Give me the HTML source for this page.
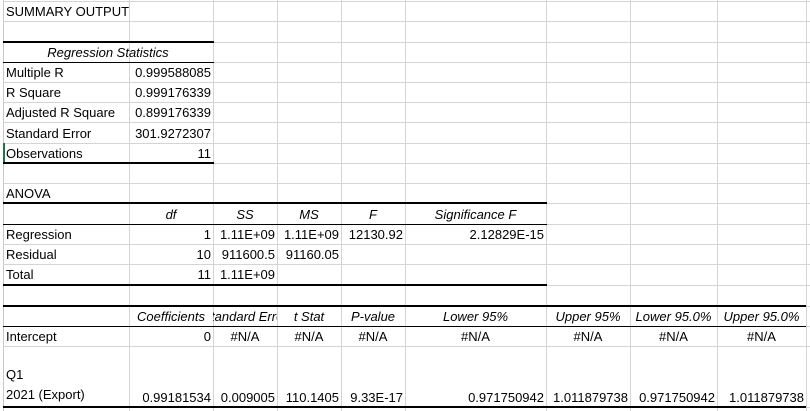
<!DOCTYPE html>
<html><head><style>
body{margin:0;width:810px;height:411px;background:#fff;position:relative;overflow:hidden;font-family:"Liberation Sans",Arial,sans-serif;font-size:13px;color:#000}
.v{position:absolute;width:1px;background:#d4d4d4;top:0;height:411px}
.h{position:absolute;height:1px;background:#d4d4d4;left:3px;width:807px}
.k{position:absolute;background:#000}
.c{position:absolute;display:flex;align-items:flex-end;white-space:nowrap;overflow:hidden;padding-bottom:2px;box-sizing:border-box;line-height:15px}
.l{justify-content:flex-start;padding-left:3px}
.r{justify-content:flex-end;padding-right:2px}
.m{justify-content:center}
i{font-style:italic}
</style></head><body>
<div class="v" style="left:3px;background:#c8c8c8"></div>
<div class="v" style="left:129px"></div><div class="v" style="left:213px"></div>
<div class="v" style="left:277px"></div><div class="v" style="left:341px"></div>
<div class="v" style="left:405px"></div><div class="v" style="left:546px"></div>
<div class="v" style="left:630px"></div><div class="v" style="left:717px"></div>
<div class="v" style="left:806px"></div>
<div class="h" style="top:1px"></div><div class="h" style="top:21px"></div>
<div class="h" style="top:62px"></div><div class="h" style="top:82px"></div>
<div class="h" style="top:102px"></div><div class="h" style="top:122px"></div>
<div class="h" style="top:143px"></div><div class="h" style="top:183px"></div>
<div class="h" style="top:244px"></div><div class="h" style="top:264px"></div>
<div class="h" style="top:346px"></div>
<div class="h" style="top:42px"></div><div class="h" style="top:163px"></div>
<div class="h" style="top:203px"></div><div class="h" style="top:224px"></div>
<div class="h" style="top:285px"></div><div class="h" style="top:306px"></div>
<div class="h" style="top:326px"></div><div class="h" style="top:407px"></div>
<div style="position:absolute;left:3px;top:143px;width:2px;height:20px;background:#217346"></div>
<div class="k" style="left:3px;top:41px;width:211px;height:2px"></div>
<div class="k" style="left:3px;top:62px;width:211px;height:1px"></div>
<div class="k" style="left:3px;top:162px;width:211px;height:2px"></div>
<div class="k" style="left:3px;top:202px;width:544px;height:2px"></div>
<div class="k" style="left:3px;top:224px;width:544px;height:1px"></div>
<div class="k" style="left:3px;top:284px;width:544px;height:2px"></div>
<div class="k" style="left:3px;top:305px;width:803px;height:2px"></div>
<div class="k" style="left:3px;top:326px;width:803px;height:1px"></div>
<div class="k" style="left:3px;top:406px;width:803px;height:2px"></div>
<div class="c l" style="left:3px;top:1px;width:200px;height:20px">SUMMARY OUTPUT</div>
<div class="c m" style="left:3px;top:42px;width:210px;height:20px"><i>Regression Statistics</i></div>
<div class="c l" style="left:3px;top:62px;width:126px;height:20px">Multiple R</div>
<div class="c r" style="left:129px;top:62px;width:84px;height:20px">0.999588085</div>
<div class="c l" style="left:3px;top:82px;width:126px;height:20px">R Square</div>
<div class="c r" style="left:129px;top:82px;width:84px;height:20px">0.999176339</div>
<div class="c l" style="left:3px;top:102px;width:126px;height:20px">Adjusted R Square</div>
<div class="c r" style="left:129px;top:102px;width:84px;height:20px">0.899176339</div>
<div class="c l" style="left:3px;top:122px;width:126px;height:21px">Standard Error</div>
<div class="c r" style="left:129px;top:122px;width:84px;height:21px">301.9272307</div>
<div class="c l" style="left:3px;top:143px;width:126px;height:20px">Observations</div>
<div class="c r" style="left:129px;top:143px;width:84px;height:20px">11</div>
<div class="c l" style="left:3px;top:183px;width:126px;height:20px">ANOVA</div>
<div class="c m" style="left:129px;top:203px;width:84px;height:21px"><i>df</i></div>
<div class="c m" style="left:213px;top:203px;width:64px;height:21px"><i>SS</i></div>
<div class="c m" style="left:277px;top:203px;width:64px;height:21px"><i>MS</i></div>
<div class="c m" style="left:341px;top:203px;width:64px;height:21px"><i>F</i></div>
<div class="c m" style="left:405px;top:203px;width:141px;height:21px"><i>Significance F</i></div>
<div class="c l" style="left:3px;top:224px;width:126px;height:20px">Regression</div>
<div class="c r" style="left:129px;top:224px;width:84px;height:20px">1</div>
<div class="c r" style="left:213px;top:224px;width:64px;height:20px">1.11E+09</div>
<div class="c r" style="left:277px;top:224px;width:64px;height:20px">1.11E+09</div>
<div class="c r" style="left:341px;top:224px;width:64px;height:20px">12130.92</div>
<div class="c r" style="left:405px;top:224px;width:141px;height:20px">2.12829E-15</div>
<div class="c l" style="left:3px;top:244px;width:126px;height:20px">Residual</div>
<div class="c r" style="left:129px;top:244px;width:84px;height:20px">10</div>
<div class="c r" style="left:213px;top:244px;width:64px;height:20px">911600.5</div>
<div class="c r" style="left:277px;top:244px;width:64px;height:20px">91160.05</div>
<div class="c l" style="left:3px;top:264px;width:126px;height:20px">Total</div>
<div class="c r" style="left:129px;top:264px;width:84px;height:20px">11</div>
<div class="c r" style="left:213px;top:264px;width:64px;height:20px">1.11E+09</div>
<div class="c m" style="left:129px;top:306px;width:84px;height:20px"><i>Coefficients</i></div>
<div class="c m" style="left:213px;top:306px;width:64px;height:20px"><i>Standard Error</i></div>
<div class="c m" style="left:277px;top:306px;width:64px;height:20px"><i>t Stat</i></div>
<div class="c m" style="left:341px;top:306px;width:64px;height:20px"><i>P-value</i></div>
<div class="c m" style="left:405px;top:306px;width:141px;height:20px"><i>Lower 95%</i></div>
<div class="c m" style="left:546px;top:306px;width:84px;height:20px"><i>Upper 95%</i></div>
<div class="c m" style="left:630px;top:306px;width:87px;height:20px"><i>Lower 95.0%</i></div>
<div class="c m" style="left:717px;top:306px;width:89px;height:20px"><i>Upper 95.0%</i></div>
<div class="c l" style="left:3px;top:326px;width:126px;height:20px">Intercept</div>
<div class="c r" style="left:129px;top:326px;width:84px;height:20px">0</div>
<div class="c m" style="left:213px;top:326px;width:64px;height:20px">#N/A</div>
<div class="c m" style="left:277px;top:326px;width:64px;height:20px">#N/A</div>
<div class="c m" style="left:341px;top:326px;width:64px;height:20px">#N/A</div>
<div class="c m" style="left:405px;top:326px;width:141px;height:20px">#N/A</div>
<div class="c m" style="left:546px;top:326px;width:84px;height:20px">#N/A</div>
<div class="c m" style="left:630px;top:326px;width:87px;height:20px">#N/A</div>
<div class="c m" style="left:717px;top:326px;width:89px;height:20px">#N/A</div>
<div class="c l" style="left:3px;top:346px;width:126px;height:61px;line-height:20px">Q1<br>2021 (Export)</div>
<div class="c r" style="left:129px;top:346px;width:84px;height:61px">0.99181534</div>
<div class="c r" style="left:213px;top:346px;width:64px;height:61px">0.009005</div>
<div class="c r" style="left:277px;top:346px;width:64px;height:61px">110.1405</div>
<div class="c r" style="left:341px;top:346px;width:64px;height:61px">9.33E-17</div>
<div class="c r" style="left:405px;top:346px;width:141px;height:61px">0.971750942</div>
<div class="c r" style="left:546px;top:346px;width:84px;height:61px">1.011879738</div>
<div class="c r" style="left:630px;top:346px;width:87px;height:61px">0.971750942</div>
<div class="c r" style="left:717px;top:346px;width:89px;height:61px">1.011879738</div>
</body></html>
